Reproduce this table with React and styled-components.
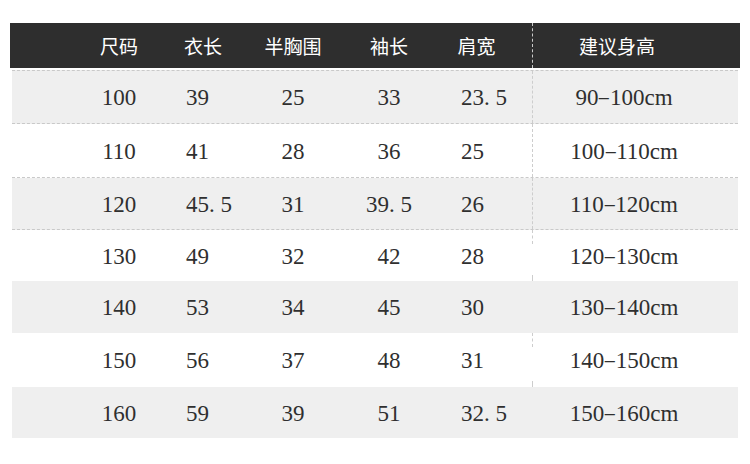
import styled, { createGlobalStyle } from "styled-components";

const GlobalStyle = createGlobalStyle`
  html, body {
    margin: 0;
    padding: 0;
    background: #ffffff;
  }
  body {
    width: 750px;
    height: 464px;
    overflow: hidden;
  }
`;

const COLS = "118px 50px 130px 62px 113px 182px 1fr";

const Page = styled.div`
  width: 750px;
  height: 464px;
  box-sizing: border-box;
  padding: 23px 10px 0 10px;
  background: #ffffff;
`;

const HeaderRow = styled.div`
  display: grid;
  grid-template-columns: ${COLS};
  height: 45px;
  padding-left: 50px;
  background: #2e2e2e;
  color: #ffffff;
  font-family: "Noto Sans CJK SC", "Noto Sans", sans-serif;
  font-size: 19px;
`;

const HeadCell = styled.div`
  display: flex;
  align-items: center;
  justify-content: center;
  padding-right: ${(p) => p.$shift || 0}px;
  border-left: ${(p) => (p.$divider ? "1px dashed rgba(255,255,255,0.75)" : "none")};
  margin-left: ${(p) => (p.$divider ? "-1px" : "0")};
`;

const Body = styled.div`
  display: flex;
  flex-direction: column;
  margin-top: 2px;
`;

const Row = styled.div`
  display: grid;
  grid-template-columns: ${COLS};
  height: ${(p) => p.$h}px;
  box-sizing: border-box;
  margin: 0 2px;
  padding-left: 48px;
  background: ${(p) => (p.$grey ? "#efefef" : "#ffffff")};
  border-top: ${(p) => (p.$top ? "1px dashed #c9c9c9" : "none")};
  border-bottom: ${(p) => (p.$bottom ? "1px dashed #c9c9c9" : "none")};
  color: #2f2f2f;
  font-family: "Liberation Serif", "Times New Roman", serif;
  font-size: 23px;
`;

const Cell = styled.div`
  position: relative;
  display: flex;
  align-items: center;
  justify-content: ${(p) => (p.$left ? "flex-start" : "center")};
  padding-left: ${(p) => p.$left || 0}px;
  padding-top: 2px;
  white-space: nowrap;
  border-left: ${(p) => (p.$divider === "full" ? "1px dashed #cdcdcd" : "none")};
  margin-left: ${(p) => (p.$divider === "full" ? "-1px" : "0")};

  ${(p) =>
    p.$divider === "part" &&
    `
    &::before, &::after {
      content: "";
      position: absolute;
      left: -1px;
      border-left: 1px dashed #cdcdcd;
    }
    &::before { top: 0; height: 14px; }
    &::after { bottom: 0; height: 6px; }
  `}
`;

const Value = styled.span`
  flex-shrink: 0;
  white-space: nowrap;
`;

const Dot = styled.span`
  display: inline-block;
  width: 0.5em;
`;

const Dash = styled.span`
  display: inline-block;
  width: 0.5em;
  text-align: center;
  transform: scale(1.7, 0.6);
`;

const Num = ({ v }) => {
  const s = String(v);
  const out = [];
  let buf = "";
  [...s].forEach((ch, i) => {
    if (ch === "." || ch === "-") {
      if (buf) out.push(buf);
      buf = "";
      out.push(ch === "." ? <Dot key={i}>.</Dot> : <Dash key={i}>-</Dash>);
    } else {
      buf += ch;
    }
  });
  if (buf) out.push(buf);
  return <Value>{out}</Value>;
};

const headers = ["尺码", "衣长", "半胸围", "袖长", "肩宽", "建议身高"];

const rows = [
  { d: ["100", "39", "25", "33", "23.5", "90-100cm"], h: 54, grey: true, top: true, bottom: true, div: "full" },
  { d: ["110", "41", "28", "36", "25", "100-110cm"], h: 54, bottom: true, div: "full" },
  { d: ["120", "45.5", "31", "39.5", "26", "110-120cm"], h: 52, grey: true, bottom: true, div: "full" },
  { d: ["130", "49", "32", "42", "28", "120-130cm"], h: 51, div: "part" },
  { d: ["140", "53", "34", "45", "30", "130-140cm"], h: 52, grey: true, div: "none" },
  { d: ["150", "56", "37", "48", "31", "140-150cm"], h: 54, div: "part" },
  { d: ["160", "59", "39", "51", "32.5", "150-160cm"], h: 51, grey: true, div: "none" },
];

// per-column alignment of the data cells (left padding, or centred)
const align = [0, 8, 0, 0, 41, 0];

export default function App() {
  return (
    <Page>
      <GlobalStyle />
      <HeaderRow>
        {headers.map((h, i) => (
          <HeadCell key={h} $divider={i === 5} $shift={i === 5 ? 14 : 0}>
            {h}
          </HeadCell>
        ))}
        <div />
      </HeaderRow>
      <Body>
        {rows.map((r) => (
          <Row key={r.d[0]} $h={r.h} $grey={r.grey} $top={r.top} $bottom={r.bottom}>
            {r.d.map((v, i) => (
              <Cell key={i} $left={align[i]} $divider={i === 5 ? r.div : "none"}>
                <Num v={v} />
              </Cell>
            ))}
            <div />
          </Row>
        ))}
      </Body>
    </Page>
  );
}
